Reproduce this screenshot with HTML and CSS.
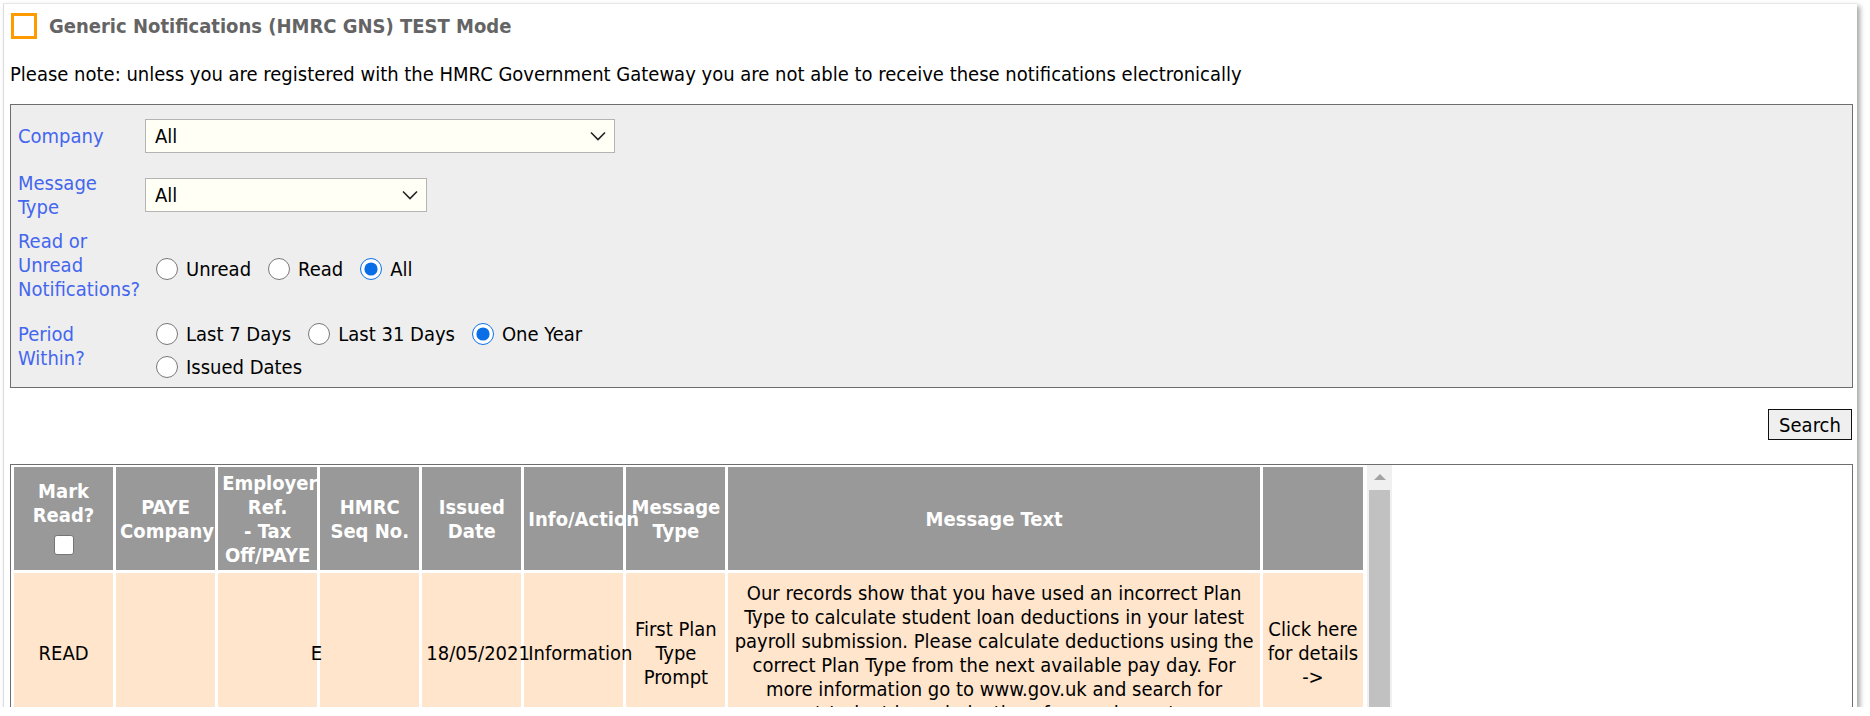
FILE: index.html
```html
<!DOCTYPE html>
<html>
<head>
  <title>Generic Notifications (HMRC GNS)</title>
  <link rel="stylesheet" href="styles.css">
</head>
<body>
  <div class="page">
    <div class="title-bar">
      <span class="title-box"></span>
      <h1 class="title">Generic Notifications (HMRC GNS) TEST Mode</h1>
    </div>

    <p class="note">Please note: unless you are registered with the HMRC Government Gateway you are not able to receive these notifications electronically</p>

    <div class="filters">
      <table class="filter-table">
        <tr class="row-company">
          <td class="label">Company</td>
          <td>
            <div class="select-wrap company-select">
              <select>
                <option>All</option>
              </select>
              <svg class="chevron" width="16" height="10" viewBox="0 0 16 10"><path d="M1 1.5 L8 8.5 L15 1.5" fill="none" stroke="#222" stroke-width="1.6"/></svg>
            </div>
          </td>
        </tr>
        <tr class="row-type">
          <td class="label">Message Type</td>
          <td>
            <div class="select-wrap type-select">
              <select>
                <option>All</option>
              </select>
              <svg class="chevron" width="16" height="10" viewBox="0 0 16 10"><path d="M1 1.5 L8 8.5 L15 1.5" fill="none" stroke="#222" stroke-width="1.6"/></svg>
            </div>
          </td>
        </tr>
        <tr class="row-read">
          <td class="label">Read or Unread Notifications?</td>
          <td>
            <div class="radio-group">
              <label><input type="radio" name="read">Unread</label>
              <label><input type="radio" name="read">Read</label>
              <label><input type="radio" name="read" checked>All</label>
            </div>
          </td>
        </tr>
        <tr class="row-period">
          <td class="label">Period Within?</td>
          <td>
            <div class="radio-group">
              <label><input type="radio" name="period">Last 7 Days</label>
              <label><input type="radio" name="period">Last 31 Days</label>
              <label><input type="radio" name="period" checked>One Year</label>
              <label><input type="radio" name="period">Issued Dates</label>
            </div>
          </td>
        </tr>
      </table>
    </div>

    <div class="actions">
      <button class="search-btn">Search</button>
    </div>

    <div class="results">
      <div class="results-scroll">
        <table class="grid">
          <tr class="grid-head">
            <th>Mark Read?<input type="checkbox" class="mark-all"></th>
            <th>PAYE Company</th>
            <th class="clip">Employer Ref.<br>- Tax Off/PAYE</th>
            <th>HMRC Seq No.</th>
            <th>Issued Date</th>
            <th>Info/Action</th>
            <th>Message Type</th>
            <th class="msg-col">Message Text</th>
            <th class="link-col"></th>
          </tr>
          <tr class="grid-row">
            <td>READ</td>
            <td></td>
            <td class="ref"><span>E</span></td>
            <td></td>
            <td>18/05/2021</td>
            <td>Information</td>
            <td>First Plan Type Prompt</td>
            <td class="msg-col">Our records show that you have used an incorrect Plan Type to calculate student loan deductions in your latest payroll submission. Please calculate deductions using the correct Plan Type from the next available pay day. For more information go to www.gov.uk and search for 'student loan deductions for employers'</td>
            <td class="link-col">Click here for details -&gt;</td>
          </tr>
        </table>
        <div class="scrollbar">
          <span class="arrow-up"></span>
          <span class="thumb"></span>
        </div>
      </div>
    </div>
  </div>
</body>
</html>
```

FILE: styles.css
```css
body {
  margin: 0;
  background: #fff;
  font-family: "DejaVu Sans Condensed", "DejaVu Sans", sans-serif;
  font-stretch: condensed;
  font-size: 20px;
  color: #000;
}

.page {
  margin: 3px 0 0 3px;
  width: 1854px;
  height: 704px;
  box-sizing: border-box;
  padding: 0 4px 0 6px;
  border-left: 1px solid #dcdcdc;
  border-top: 1px solid #e6e6e6;
  box-shadow: 3px 3px 5px rgba(0, 0, 0, 0.35);
  overflow: hidden;
}

.title-bar {
  display: flex;
  align-items: center;
  padding-top: 9px;
}

.title-box {
  width: 20px;
  height: 20px;
  margin-left: 1px;
  border: 3px solid #ff9a00;
  background: #fff;
}

.title {
  margin: 0 0 0 12px;
  font-size: 20px;
  font-weight: bold;
  color: #646464;
}

.note {
  margin: 23px 0 0 0;
  line-height: 24px;
}

.filters {
  margin-top: 18px;
  border: 1px solid #6e6e6e;
  background: #eeeeee;
}

.filter-table {
  border-collapse: collapse;
}

.filter-table td {
  padding: 4px 0;
  vertical-align: middle;
  line-height: 24px;
}

.filter-table .label {
  width: 123px;
  padding-left: 7px;
  padding-right: 4px;
  color: #4466ee;
}

.row-read td {
  padding-top: 6px;
  padding-bottom: 2px;
}

.row-period td {
  padding-top: 6px;
}

.row-read .radio-group,
.row-period .radio-group {
  padding-top: 8px;
}

.select-wrap {
  position: relative;
  margin: 10px 0;
}

.row-type .select-wrap {
  margin: 0;
}

.select-wrap select {
  appearance: none;
  display: block;
  height: 34px;
  box-sizing: border-box;
  padding: 0 9px;
  border: 1px solid #b4b4b4;
  background: #fffff6;
  font-family: inherit;
  font-stretch: condensed;
  font-size: 20px;
  color: #000;
}

.company-select,
.company-select select {
  width: 470px;
}

.type-select,
.type-select select {
  width: 282px;
}

.select-wrap .chevron {
  position: absolute;
  right: 9px;
  top: 12px;
  pointer-events: none;
}

.radio-group {
  display: flex;
  flex-wrap: wrap;
  width: 470px;
}

.radio-group label {
  display: flex;
  align-items: center;
  height: 33px;
  margin-right: 6px;
  white-space: nowrap;
}

.radio-group input {
  width: 22px;
  height: 22px;
  margin: 0 8px 0 11px;
  accent-color: #0a6ee6;
}

.actions {
  display: flex;
  justify-content: flex-end;
  margin-top: 21px;
  padding-right: 1px;
}

.search-btn {
  height: 31px;
  width: 84px;
  padding: 0;
  border: 1px solid #111;
  border-radius: 0;
  background: #efefef;
  font-family: inherit;
  font-stretch: condensed;
  font-size: 20px;
  color: #000;
}

.results {
  margin-top: 24px;
  border: 1px solid #6e6e6e;
  border-bottom: none;
  height: 400px;
}

.results-scroll {
  display: flex;
  align-items: flex-start;
  width: 1381px;
}

.grid {
  width: 1356px;
  table-layout: fixed;
  border-spacing: 3px;
  margin-top: -1px;
}

.grid th,
.grid td {
  width: 91px;
  padding: 0 4px;
  text-align: center;
  vertical-align: middle;
  line-height: 24px;
}

.grid th {
  height: 103px;
  background: #999999;
  color: #fff;
  font-size: 20px;
  font-weight: bold;
}

.grid td {
  height: 160px;
  background: #ffe5cc;
}

.grid .msg-col {
  width: 523px;
}

.grid .link-col {
  width: 92px;
}

.grid .clip {
  overflow: hidden;
}

.grid .ref {
  text-align: right;
  padding-right: 0;
}

.grid .ref span {
  margin-right: -5px;
}

.mark-all {
  appearance: none;
  display: block;
  width: 20px;
  height: 20px;
  margin: 8px auto 4px;
  border: 1px solid #767676;
  border-radius: 3px;
  background: #fff;
}

.scrollbar {
  position: relative;
  width: 25px;
  flex: none;
  height: 400px;
  margin-left: 1px;
  background: #f0f0f0;
}

.arrow-up {
  position: absolute;
  left: 7px;
  top: 9px;
  width: 0;
  height: 0;
  border-left: 6px solid transparent;
  border-right: 6px solid transparent;
  border-bottom: 6px solid #a3a3a3;
}

.thumb {
  position: absolute;
  left: 2px;
  right: 2px;
  top: 25px;
  bottom: 0;
  background: #c1c1c1;
}
```
